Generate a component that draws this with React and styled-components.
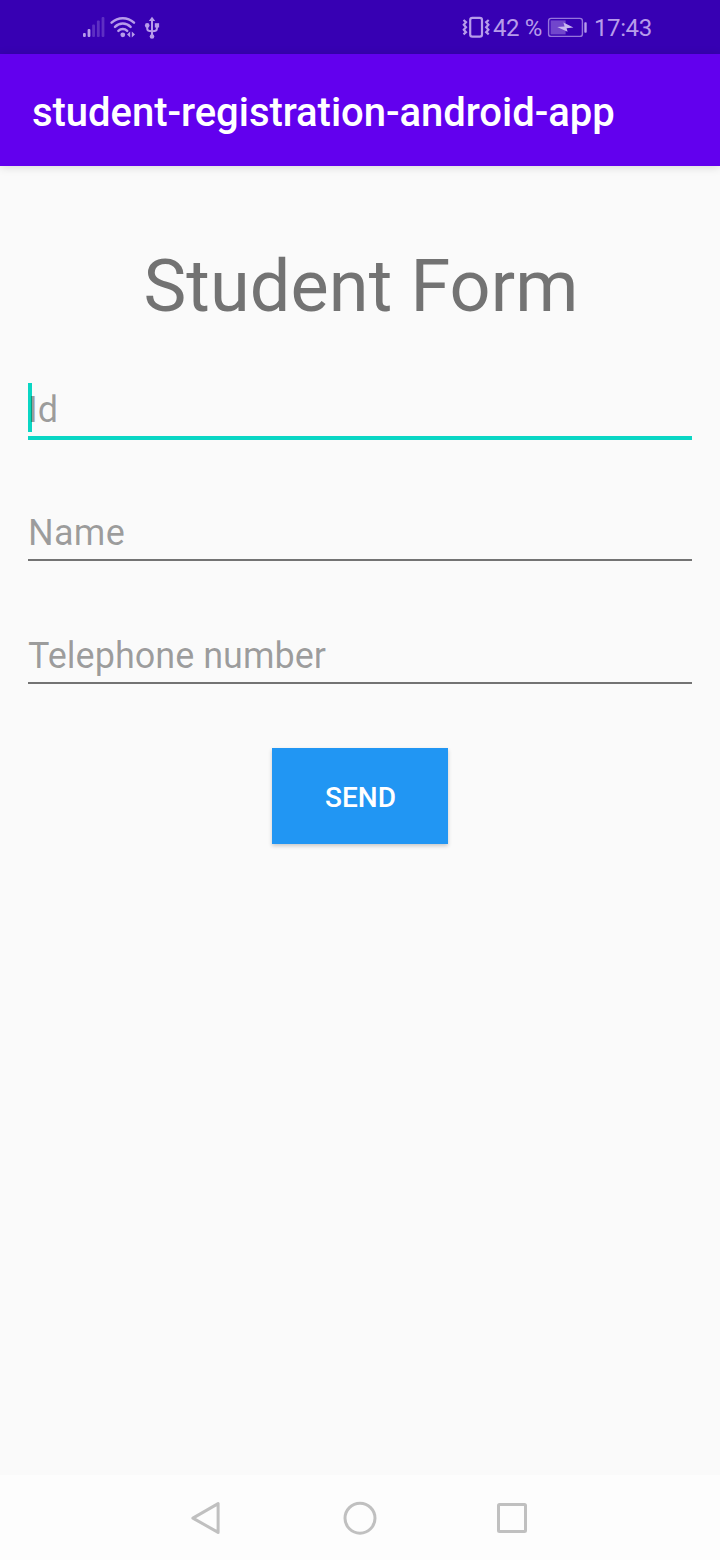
import React from "react";
import styled, { createGlobalStyle } from "styled-components";

const GlobalStyle = createGlobalStyle`
  * { box-sizing: border-box; }
  body { margin: 0; background: #fafafa; font-family: Roboto, "Liberation Sans", sans-serif; }
`;

const Screen = styled.div`
  display: flex;
  flex-direction: column;
  width: 720px;
  height: 1560px;
  overflow: hidden;
  background: #fafafa;
`;

const StatusBar = styled.header`
  display: flex;
  justify-content: space-between;
  align-items: center;
  flex: none;
  height: 54px;
  padding: 0 68px 0 82px;
  background: #3700b3;
  color: #b79cea;
`;

const StatusGroup = styled.div`
  display: flex;
  align-items: center;
`;

const StatusIcon = styled.svg`
  display: block;
  flex: none;
  margin-left: ${({ $gap }) => $gap || 0}px;
  fill: currentColor;
`;

const StatusText = styled.span`
  width: ${({ $width }) => $width}px;
  margin-left: ${({ $gap }) => $gap}px;
  padding-top: 2px;
  font-size: 24px;
  line-height: 28px;
  letter-spacing: -0.4px;
  white-space: nowrap;
`;

const AppBar = styled.div`
  position: relative;
  display: flex;
  align-items: center;
  flex: none;
  height: 112px;
  padding: 6px 32px 0;
  background: #6200ee;
  box-shadow: 0 1px 9px rgba(0, 0, 0, 0.14);
`;

const AppTitle = styled.h1`
  margin: 0;
  color: #fff;
  font-size: 40px;
  font-weight: 500;
  line-height: 48px;
  letter-spacing: -0.04px;
  white-space: nowrap;
`;

const Form = styled.form`
  display: flex;
  flex-direction: column;
  flex: 1;
  padding: 79px 28px 0;
`;

const Heading = styled.h2`
  margin: 0 0 60px;
  padding-left: 2px;
  color: #737373;
  font-size: 72px;
  font-weight: 400;
  line-height: 84px;
  letter-spacing: 0.12px;
  text-align: center;
`;

const Field = styled.label`
  position: relative;
  display: block;
  height: 123px;
`;

const Input = styled.input`
  position: relative;
  display: block;
  width: 100%;
  height: ${({ $active }) => ($active ? 51 : 49)}px;
  padding: 0 0 5px;
  border: 0;
  border-bottom: ${({ $active }) => ($active ? "4px solid #0ad6c4" : "2px solid #737373")};
  border-radius: 0;
  outline: none;
  background: transparent;
  color: #212121;
  font: 400 36px/42px Roboto, sans-serif;
  letter-spacing: ${({ $tracking }) => $tracking || 0}px;
  &::placeholder { color: rgba(0, 0, 0, 0.38); opacity: 1; }
`;

const Caret = styled.span`
  position: absolute;
  left: 0;
  top: -6px;
  width: 4px;
  height: 49px;
  background: #0ad6c4;
`;

const SendButton = styled.button`
  align-self: center;
  width: 176px;
  height: 96px;
  margin-top: -10px;
  padding: 3px 0 0 1px;
  border: 0;
  background: #2196f3;
  box-shadow: 0 2px 4px rgba(0, 0, 0, 0.2);
  color: #fff;
  font: 500 28px/32px Roboto, sans-serif;
`;

const NavBar = styled.nav`
  display: flex;
  justify-content: center;
  align-items: center;
  gap: 112px;
  flex: none;
  height: 85px;
  background: #fdfdfd;
`;

const NavIcon = styled.svg`
  display: block;
  width: 40px;
  height: 40px;
  fill: none;
  stroke: #c0c0c0;
  stroke-width: 3;
  stroke-linejoin: round;
`;

const fields = [
  { name: "id", hint: "Id", active: true },
  { name: "name", hint: "Name", tracking: 0.3 },
  { name: "phone", hint: "Telephone number" },
];

function SignalIcon() {
  return (
    <StatusIcon width="24" height="24" viewBox="82 15 24 24">
      <rect x="83" y="33" width="2.8" height="4" rx="1" />
      <rect x="87.6" y="29" width="2.8" height="8" rx="1" />
      <g opacity="0.3">
        <rect x="92.2" y="24.6" width="2.8" height="12.4" rx="1" />
        <rect x="96.9" y="20.6" width="2.8" height="16.4" rx="1" />
        <rect x="101.6" y="17" width="2.8" height="20" rx="1" />
      </g>
    </StatusIcon>
  );
}

function WifiIcon() {
  return (
    <StatusIcon $gap={3} width="28" height="24" viewBox="109 15 28 24">
      <g fill="none" stroke="currentColor" strokeWidth="2.5" strokeLinecap="round">
        <path d="M111.6 22.6Q116.5 18.2 122.8 18.2T134 22.6" />
        <path d="M115 26.8Q118.3 23.6 122.8 23.6T130.6 26.8" />
        <path d="M118.4 30.8Q120.3 29 122.8 29T127.2 30.8" />
      </g>
      <circle cx="122.8" cy="34.8" r="2.4" />
      <path d="M130.2 31.6V37.4L127 34.5ZM131.8 31.6V37.4L135 34.5Z" />
    </StatusIcon>
  );
}

function UsbIcon() {
  return (
    <StatusIcon $gap={6} width="18" height="24" viewBox="143 15 18 24">
      <path d="M152 16.8L155.2 21H148.8Z" />
      <path d="M152 20V36M147.2 26V28.4Q147.2 30.6 149.4 30.9L152 31.3M156.9 26V28.4Q156.9 30.6 154.8 30.9L152 31.3" fill="none" stroke="currentColor" strokeWidth="2" />
      <circle cx="147.2" cy="25.4" r="2.3" />
      <rect x="154.8" y="23.2" width="4.3" height="4.3" />
      <circle cx="152" cy="36.5" r="2.3" />
    </StatusIcon>
  );
}

function VibrateIcon() {
  return (
    <StatusIcon width="28" height="24" viewBox="462 15 28 24">
      <g fill="none" stroke="currentColor" strokeWidth="2.2">
        <rect x="470.2" y="17.8" width="11.8" height="18.8" rx="2.2" />
        <path d="M463.5 20L466 22.2L463.8 24.7L466 27.2L463.8 29.7L466 32.2L463.5 34.4M488.7 20L486.2 22.2L488.4 24.7L486.2 27.2L488.4 29.7L486.2 32.2L488.7 34.4" />
      </g>
    </StatusIcon>
  );
}

function BatteryIcon() {
  return (
    <StatusIcon $gap={5} width="40" height="24" viewBox="547 15 40 24">
      <rect x="548.6" y="18.4" width="33.8" height="18" rx="2.5" fill="none" stroke="currentColor" strokeWidth="1.4" opacity="0.75" />
      <rect x="550.6" y="20.4" width="15" height="14" opacity="0.45" />
      <rect x="584.3" y="22.2" width="2.4" height="10.6" rx="0.8" />
      <path d="M557.2 27L564.6 26.6L563.4 22.6L573.4 27.6L566.6 28.2L567.6 31.8Z" fill="#c8b6ef" />
    </StatusIcon>
  );
}

export default function App() {
  return (
    <Screen>
      <GlobalStyle />
      <StatusBar>
        <StatusGroup>
          <SignalIcon />
          <WifiIcon />
          <UsbIcon />
        </StatusGroup>
        <StatusGroup>
          <VibrateIcon />
          <StatusText $gap={3} $width={49}>42 %</StatusText>
          <BatteryIcon />
          <StatusText $gap={7} $width={58}>17:43</StatusText>
        </StatusGroup>
      </StatusBar>
      <AppBar>
        <AppTitle>student-registration-android-app</AppTitle>
      </AppBar>
      <Form onSubmit={(event) => event.preventDefault()}>
        <Heading>Student Form</Heading>
        {fields.map(({ name, hint, active, tracking }) => (
          <Field key={name}>
            {active && <Caret />}
            <Input name={name} placeholder={hint} $active={active} $tracking={tracking} />
          </Field>
        ))}
        <SendButton type="submit">SEND</SendButton>
      </Form>
      <NavBar>
        <NavIcon viewBox="0 0 40 40">
          <path d="M5.2 20.3L30.4 5.8V34.6Z" transform="translate(-0.3 -0.2)" />
        </NavIcon>
        <NavIcon viewBox="0 0 40 40">
          <circle cx="20" cy="20.2" r="15" />
        </NavIcon>
        <NavIcon viewBox="0 0 40 40">
          <rect x="6.5" y="6.5" width="27" height="27" rx="1" />
        </NavIcon>
      </NavBar>
    </Screen>
  );
}
